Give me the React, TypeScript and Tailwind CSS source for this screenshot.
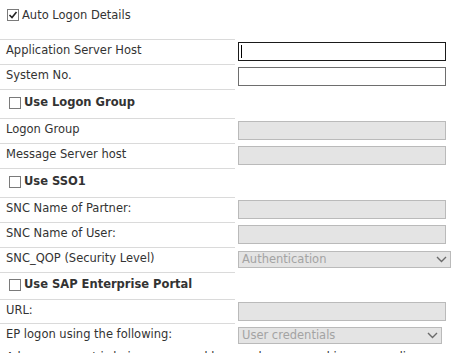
import React from "react";

const font = { fontFamily: '"DejaVu Sans", Verdana, sans-serif' };

function Check({ checked }: { checked?: boolean }) {
  return (
    <span className="inline-flex w-[12px] h-[12px] border border-[#7a7a7a] bg-white items-center justify-center shrink-0">
      {checked && (
        <svg width="10" height="10" viewBox="0 0 10 10">
          <polyline points="1.5,5 4,7.5 8.5,2" fill="none" stroke="#222" strokeWidth="1.6" />
        </svg>
      )}
    </span>
  );
}

function Row({ label, children, h = "h-[25px]" }: { label: React.ReactNode; children?: React.ReactNode; h?: string }) {
  return (
    <div className={`flex ${h}`}>
      <div className="w-[235px] border-t border-[#dadada] pl-[6px] pb-[2px] flex items-center text-[#333]">{label}</div>
      <div className="pl-[3px] flex items-center">{children}</div>
    </div>
  );
}

function Disabled({ w = "w-[208px]" }: { w?: string }) {
  return <div className={`${w} h-[19px] bg-[#e4e4e4] border border-[#bababa]`} />;
}

function Select({ text, w }: { text: string; w: string }) {
  return (
    <div className={`${w} h-[17px] bg-[#e4e4e4] border border-[#bababa] flex items-center justify-between pl-[3px] pr-[3px] text-[#a3a3a3]`}>
      <span>{text}</span>
      <svg width="11" height="7" viewBox="0 0 11 7">
        <polyline points="1,1 5.5,5.5 10,1" fill="none" stroke="#6b6b6b" strokeWidth="1.4" />
      </svg>
    </div>
  );
}

function CheckRow({ label, h = "h-[29px]" }: { label: string; h?: string }) {
  return (
    <Row h={h} label={
      <span className="flex items-center gap-[3px] pl-[3px] font-bold text-[#333]"><Check />{label}</span>
    } />
  );
}

export default function App() {
  return (
    <div className="w-[465px] h-[353px] overflow-hidden bg-white text-[11.5px] leading-none" style={font}>
      <div className="h-[39px] flex items-start pt-[9px] pl-[7px] gap-[3px] text-[#333]">
        <Check checked />
        <span className="mt-[1px]">Auto Logon Details</span>
      </div>
      <Row label="Application Server Host">
        <div className="w-[208px] h-[19px] bg-white border border-[#1a1a1a] flex items-center pl-[2px]">
          <div className="w-[1px] h-[13px] bg-black" />
        </div>
      </Row>
      <Row label="System No.">
        <div className="w-[208px] h-[19px] bg-white border border-[#6e6e6e]" />
      </Row>
      <CheckRow label="Use Logon Group" />
      <Row label="Logon Group"><Disabled /></Row>
      <Row label="Message Server host"><Disabled /></Row>
      <CheckRow label="Use SSO1" />
      <Row label="SNC Name of Partner:"><Disabled /></Row>
      <Row label="SNC Name of User:"><Disabled /></Row>
      <Row label="SNC_QOP (Security Level)"><Select text="Authentication" w="w-[213px]" /></Row>
      <CheckRow label="Use SAP Enterprise Portal" h="h-[27px]" />
      <Row label="URL:" h="h-[24px]"><Disabled /></Row>
      <Row label="EP logon using the following:"><Select text="User credentials" w="w-[204px]" /></Row>
      <div className="pl-[6px] pt-[4px] text-[#333] whitespace-nowrap">
        A logon request is being processed by your browser and is now pending
      </div>
    </div>
  );
}
